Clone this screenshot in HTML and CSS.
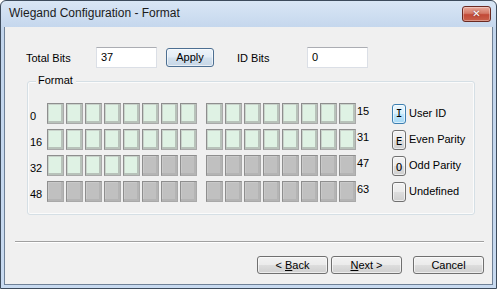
FILE: index.html
```html
<!DOCTYPE html>
<html>
<head>
<meta charset="utf-8">
<title>Wiegand Configuration - Format</title>
<link rel="stylesheet" href="styles.css">
</head>
<body>
<div class="window">
    <div class="titlebar">
        <span class="title">Wiegand Configuration - Format</span>
        <div class="close"><span>&#x2715;</span></div>
    </div>
    <div class="client">
        <div class="toprow">
            <span class="lbl">Total Bits</span>
            <div class="edit">37</div>
            <div class="btn btn-apply">Apply</div>
            <span class="lbl lbl-id">ID Bits</span>
            <div class="edit">0</div>
        </div>

        <div class="group">
            <div class="legend">Format</div>

            <div class="bitrow">
                <span class="rowlbl">0</span>
                <div class="nibbles">
                    <i class="cell on"></i><i class="cell on"></i><i class="cell on"></i><i class="cell on"></i>
                    <i class="cell on"></i><i class="cell on"></i><i class="cell on"></i><i class="cell on"></i>
                </div>
                <div class="nibbles second">
                    <i class="cell on"></i><i class="cell on"></i><i class="cell on"></i><i class="cell on"></i>
                    <i class="cell on"></i><i class="cell on"></i><i class="cell on"></i><i class="cell on"></i>
                </div>
                <span class="endlbl">15</span>
                <div class="key key-hot">I</div>
                <span class="keytext">User ID</span>
            </div>

            <div class="bitrow">
                <span class="rowlbl">16</span>
                <div class="nibbles">
                    <i class="cell on"></i><i class="cell on"></i><i class="cell on"></i><i class="cell on"></i>
                    <i class="cell on"></i><i class="cell on"></i><i class="cell on"></i><i class="cell on"></i>
                </div>
                <div class="nibbles second">
                    <i class="cell on"></i><i class="cell on"></i><i class="cell on"></i><i class="cell on"></i>
                    <i class="cell on"></i><i class="cell on"></i><i class="cell on"></i><i class="cell on"></i>
                </div>
                <span class="endlbl">31</span>
                <div class="key">E</div>
                <span class="keytext">Even Parity</span>
            </div>

            <div class="bitrow">
                <span class="rowlbl">32</span>
                <div class="nibbles">
                    <i class="cell on"></i><i class="cell on"></i><i class="cell on"></i><i class="cell on"></i>
                    <i class="cell on"></i><i class="cell"></i><i class="cell"></i><i class="cell"></i>
                </div>
                <div class="nibbles second">
                    <i class="cell"></i><i class="cell"></i><i class="cell"></i><i class="cell"></i>
                    <i class="cell"></i><i class="cell"></i><i class="cell"></i><i class="cell"></i>
                </div>
                <span class="endlbl">47</span>
                <div class="key">O</div>
                <span class="keytext">Odd Parity</span>
            </div>

            <div class="bitrow">
                <span class="rowlbl">48</span>
                <div class="nibbles">
                    <i class="cell"></i><i class="cell"></i><i class="cell"></i><i class="cell"></i>
                    <i class="cell"></i><i class="cell"></i><i class="cell"></i><i class="cell"></i>
                </div>
                <div class="nibbles second">
                    <i class="cell"></i><i class="cell"></i><i class="cell"></i><i class="cell"></i>
                    <i class="cell"></i><i class="cell"></i><i class="cell"></i><i class="cell"></i>
                </div>
                <span class="endlbl">63</span>
                <div class="key"></div>
                <span class="keytext">Undefined</span>
            </div>
        </div>

        <div class="separator"></div>

        <div class="buttons">
            <div class="btn btn-nav">&lt; <u>B</u>ack</div>
            <div class="btn btn-nav"><u>N</u>ext &gt;</div>
            <div class="btn btn-nav btn-cancel">Cancel</div>
        </div>
    </div>
</div>
</body>
</html>
```

FILE: styles.css
```css
* {
    -webkit-box-sizing: border-box;
    box-sizing: border-box;
}

body {
    margin: 0;
    background: #ffffff;
    font-family: "Liberation Sans", Arial, sans-serif;
    font-size: 11px;
    color: #000;
}

.window {
    width: 497px;
    height: 289px;
    border: 1px solid #3d4b5c;
    border-radius: 6px 6px 0 0;
    background: linear-gradient(#d9e6f5, #c2d5ec 30px, #c8daf0);
    padding: 0 3px 3px 3px;
}

.titlebar {
    height: 26px;
    display: flex;
    align-items: center;
    justify-content: space-between;
    padding: 0 2px 2px 5px;
}

.title {
    font-size: 12px;
    color: #1b1b1b;
}

.close {
    width: 29px;
    height: 16px;
    margin-top: 1px;
    border: 1px solid #6b2a22;
    border-radius: 3px;
    background: linear-gradient(#e9a99a, #d47a68 45%, #c24a38 55%, #c9604a);
    display: flex;
    align-items: center;
    justify-content: center;
    box-shadow: inset 0 0 0 1px rgba(255,255,255,.35);
}

.close span {
    color: #fff;
    font-family: "DejaVu Sans", sans-serif;
    font-size: 10px;
    font-weight: bold;
    text-shadow: 0 0 2px #6b2a22;
}

.client {
    height: 258px;
    background: #f0f0f0;
    border: 1px solid #6f8197;
    border-top: none;
    padding-top: 20px;
}

.toprow {
    display: flex;
    align-items: center;
    height: 21px;
    padding-left: 21px;
}

.lbl {
    width: 70px;
}

.lbl-id {
    margin-left: 23px;
}

.edit {
    width: 61px;
    height: 21px;
    background: #fff;
    border: 1px solid #dbdfe6;
    border-top-color: #abadb3;
    padding: 3px 0 0 4px;
}

.btn {
    border: 1px solid #707070;
    border-radius: 3px;
    background: linear-gradient(#f2f2f2, #ebebeb 48%, #dddddd 52%, #cfcfcf);
    text-align: center;
    color: #000;
    box-shadow: inset 0 0 0 1px rgba(255,255,255,.6);
}

.btn-apply {
    width: 48px;
    height: 19px;
    line-height: 17px;
    margin-left: 9px;
    border-color: #4d6f92;
    background: linear-gradient(#eef4fa, #e2ecf6 48%, #d3e1ee 52%, #c6d6e6);
}

.group {
    margin: 13px 0 0 22px;
    width: 448px;
    height: 134px;
    border: 1px solid #d5dfe5;
    border-radius: 3px;
    box-shadow: inset 0 0 0 1px #fbfbfb;
    padding: 14px 0 0 2px;
}

.legend {
    margin: -22px 0 14px 6px;
    padding: 0 2px;
    width: 40px;
    height: 15px;
    background: #f0f0f0;
}

.bitrow {
    display: flex;
    align-items: center;
    height: 21px;
    margin-bottom: 5px;
}

.rowlbl {
    width: 17px;
    padding-top: 5px;
}

.nibbles {
    display: flex;
    gap: 2px;
}

.nibbles.second {
    margin-left: 9px;
}

.cell {
    display: block;
    width: 17px;
    height: 21px;
    background: #c0c0c0;
    border: 1px solid #8e8e8e;
    border-right-color: #a9a9a9;
    border-bottom-color: #a9a9a9;
    box-shadow: inset -2px -2px 0 #b4b4b4, inset 1px 1px 0 #c9c9c9;
}

.cell.on {
    background: #dff2e4;
    box-shadow: inset -2px -2px 0 #b8c2ba, inset 1px 1px 0 #c9d3cb;
}

.endlbl {
    width: 36px;
    padding: 0 0 6px 1px;
}

.key {
    width: 14px;
    height: 20px;
    border: 1px solid #707070;
    border-radius: 3px;
    background: linear-gradient(#f2f2f2, #ebebeb 48%, #dddddd 52%, #cfcfcf);
    box-shadow: inset 0 0 0 1px rgba(255,255,255,.6);
    font-family: "DejaVu Sans Mono", monospace;
    font-size: 11px;
    text-align: center;
    line-height: 22px;
}

.key-hot {
    border-color: #3c7fb1;
    background: linear-gradient(#eaf6fd, #d9f0fc 48%, #bee6fd 52%, #a7d9f5);
    line-height: 18px;
}

.keytext {
    margin-left: 3px;
    padding-bottom: 2px;
}

.separator {
    margin: 26px 8px 0 10px;
    height: 2px;
    border-top: 1px solid #a0a0a0;
    border-bottom: 1px solid #ffffff;
}

.buttons {
    display: flex;
    justify-content: flex-end;
    padding-right: 8px;
    margin-top: 13px;
}

.btn-nav {
    width: 71px;
    height: 18px;
    line-height: 16px;
    margin-left: 3px;
}

.btn-cancel {
    margin-left: 11px;
}

u {
    text-decoration: underline;
}
```
